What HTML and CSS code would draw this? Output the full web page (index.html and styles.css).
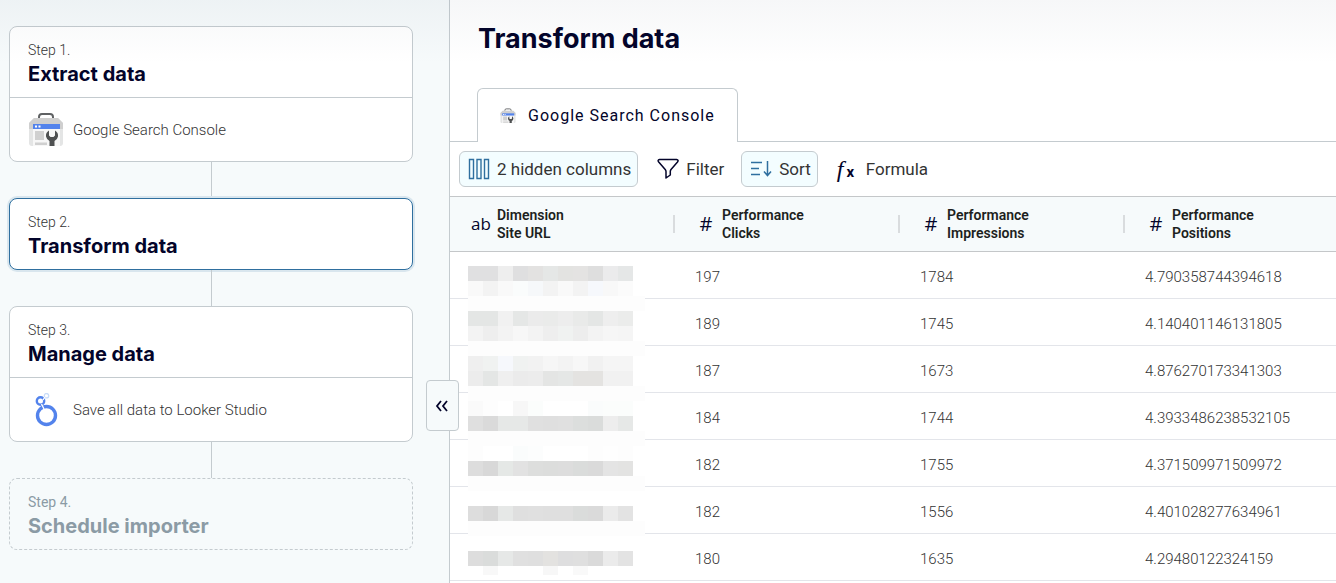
FILE: index.html
```html
<!DOCTYPE html>
<html lang="en">

<head>
    <meta charset="UTF-8">
    <meta name="viewport" content="width=device-width, initial-scale=1.0">
    <title>Transform data</title>
    <link rel="stylesheet" href="styles.css">
</head>

<body>
    <svg class="defs" width="0" height="0" aria-hidden="true">
        <symbol id="search-console" viewBox="0 0 36 34">
            <path d="M11 6V4q0-3 3-3h8q3 0 3 3v2" fill="none" stroke="#5f6163" stroke-width="2" />
            <path d="M6 5h24l5 5v20q0 3-3 3H4q-3 0-3-3V10z" fill="#e4e5e5" />
            <path d="M6 5h24l5 5v6H1v-6z" fill="#cfcfcf" />
            <path d="M5 15h27v18H5z" fill="#f7f7f7" />
            <path d="M5 11h27v5H5z" fill="#5383ec" />
            <path d="M7 12.500h2v2H7zM10.500 12.500h2v2h-2z" fill="#fff" />
            <path d="M7 18h9v9H7zM7 29.500h12V32H7z" fill="#d0d0d0" />
            <path d="M21 17.500q-3.500 2-3 6 .6 3 3.500 4.500V33h5v-5q3-1.500 3.500-4.500.5-4-3-6v5l-1.500 1.500h-3L21 22.500z" fill="#4e5051" />
        </symbol>
    </svg>

    <div class="layout">
        <aside class="sidebar">
            <section class="step">
                <div class="step-head">
                    <div class="step-label">Step 1.</div>
                    <h2 class="step-title">Extract data</h2>
                </div>
                <div class="step-body">
                    <svg class="step-icon"><use href="#search-console" /></svg>
                    Google Search Console
                </div>
            </section>
            <div class="connector"></div>
            <section class="step active">
                <div class="step-head">
                    <div class="step-label">Step 2.</div>
                    <h2 class="step-title">Transform data</h2>
                </div>
            </section>
            <div class="connector"></div>
            <section class="step">
                <div class="step-head">
                    <div class="step-label">Step 3.</div>
                    <h2 class="step-title">Manage data</h2>
                </div>
                <div class="step-body">
                    <svg class="step-icon" viewBox="0 0 36 34" fill="none">
                        <circle cx="18.500" cy="22.500" r="9" stroke="#5383ec" stroke-width="3.400" />
                        <circle cx="12.500" cy="8" r="3.700" stroke="#5383ec" stroke-width="2.400" />
                        <circle cx="18.500" cy="2.700" r="2.200" stroke="#c9dcf8" stroke-width="1.300" />
                        <path d="M13.500 11l2.500 5M15 7l2-3" stroke="#fff" stroke-width="1.300" />
                    </svg>
                    Save all data to Looker Studio
                </div>
            </section>
            <div class="connector"></div>
            <section class="step disabled">
                <div class="step-head">
                    <div class="step-label">Step 4.</div>
                    <h2 class="step-title">Schedule importer</h2>
                </div>
            </section>

            <button class="collapse" type="button" aria-label="Collapse sidebar">
                <svg width="14" height="12" viewBox="0 0 14 12" fill="none" stroke="#03042a" stroke-width="1.800">
                    <path d="M6 1L2 6l4 5M12 1L8 6l4 5" />
                </svg>
            </button>
        </aside>

        <main class="main">
            <h1 class="page-title">Transform data</h1>

            <div class="tabs">
                <button class="tab" type="button">
                    <svg class="tab-icon"><use href="#search-console" /></svg>
                    Google Search Console
                </button>
            </div>

            <div class="toolbar">
                <button class="tool on" type="button">
                    <svg width="22" height="22" viewBox="0 0 22 22" fill="none" stroke="#2f6f9f" stroke-width="1.400">
                        <path d="M1.500 1.500h4v19h-4zM9 1.500h4v19H9zM16.500 1.500h4v19h-4z" />
                    </svg>
                    2 hidden columns
                </button>
                <button class="tool" type="button">
                    <svg width="22" height="22" viewBox="0 0 22 22" fill="none" stroke="#03042a" stroke-width="1.500" stroke-linejoin="round">
                        <path d="M2.500 1.500h17q2.500.5 1 2.500L14 11.500q-.7 1-.7 2v3.500L9 20v-6.500q0-1-.8-2L1.700 4q-1.500-2 .8-2.500z" />
                    </svg>
                    Filter
                </button>
                <button class="tool on" type="button">
                    <svg width="22" height="22" viewBox="0 0 22 22" fill="none" stroke="#2f6f9f" stroke-width="1.500">
                        <path d="M1 4.500h11M1 10.500h8M1 16.500h9M17.500 3v14M14 13.500l3.500 4 3.500-4" />
                    </svg>
                    Sort
                </button>
                <button class="tool" type="button">
                    <span class="fx" aria-hidden="true"><i>f</i><b>x</b></span>
                    Formula
                </button>
            </div>

            <div class="table-wrap">
                <table class="data">
                    <thead>
                        <tr>
                            <th><div class="col"><span class="type">ab</span><span>Dimension<br>Site URL</span></div></th>
                            <th><div class="col"><span class="type num">#</span><span>Performance<br>Clicks</span></div></th>
                            <th><div class="col"><span class="type num">#</span><span>Performance<br>Impressions</span></div></th>
                            <th><div class="col"><span class="type num">#</span><span>Performance<br>Positions</span></div></th>
                        </tr>
                    </thead>
                    <tbody>
                        <tr><td></td><td>197</td><td>1784</td><td>4.790358744394618</td></tr>
                        <tr><td></td><td>189</td><td>1745</td><td>4.140401146131805</td></tr>
                        <tr><td></td><td>187</td><td>1673</td><td>4.876270173341303</td></tr>
                        <tr><td></td><td>184</td><td>1744</td><td>4.3933486238532105</td></tr>
                        <tr><td></td><td>182</td><td>1755</td><td>4.371509971509972</td></tr>
                        <tr><td></td><td>182</td><td>1556</td><td>4.401028277634961</td></tr>
                        <tr><td></td><td>180</td><td>1635</td><td>4.29480122324159</td></tr>
                    </tbody>
                </table>
                <svg class="mosaic" id="mosaic" width="177" height="309" aria-hidden="true"></svg>
            </div>
        </main>
    </div>

    <script src="mosaic.js"></script>
</body>

</html>
```
FILE: styles.css
```css
* {
    box-sizing: border-box;
}

body {
    margin: 0;
    font-family: Roboto, "Liberation Sans", sans-serif;
    color: #333;
    background: #fff;
}

/* soft shade under the top edge of the window */
body::before {
    content: "";
    position: absolute;
    top: 0;
    left: 0;
    right: 0;
    height: 64px;
    background: linear-gradient(rgb(30 50 80 / 0.04), rgb(30 50 80 / 0));
    pointer-events: none;
    z-index: 2;
}

h1,
h2 {
    margin: 0;
    font-family: Inter, sans-serif;
    font-weight: 700;
    color: #03042a;
}

button {
    font: inherit;
    color: inherit;
    cursor: pointer;
}

.defs {
    position: absolute;
}

.layout {
    display: flex;
    height: 100vh;
    overflow: hidden;
}

/* sidebar */
.sidebar {
    position: relative;
    flex: 0 0 450px;
    padding: 26px 36px 0 9px;
    background: #f6fafb;
    border-right: 1px solid #c4cbcf;
}

.step {
    background: #fff;
    border: 1px solid #c4cbcf;
    border-radius: 8px;
}

.step.active {
    border-color: #2f6f9f;
    box-shadow: 0 0 0 2px #d9e6ee;
}

.step.disabled {
    background: none;
    border-style: dashed;
}

.step-head {
    padding: 12px 18px 10px;
}

.step-label {
    font-size: 14px;
    font-weight: 300;
    line-height: 22px;
}

.step-title {
    font-size: 20px;
    line-height: 26px;
}

.disabled .step-label,
.disabled .step-title {
    color: #8b9ba5;
}

.disabled .step-label {
    font-weight: 400;
}

.step-body {
    display: flex;
    align-items: center;
    gap: 9px;
    height: 64px;
    padding: 0 18px;
    border-top: 1px solid #c4cbcf;
    font-size: 15px;
    font-weight: 300;
}

.step-icon {
    width: 36px;
    height: 34px;
}

.connector {
    width: 1px;
    height: 36px;
    margin: 0 auto;
    background: #c4cbcf;
}

.collapse {
    position: absolute;
    top: 380px;
    right: -10px;
    width: 33px;
    height: 51px;
    padding: 0;
    background: #f6fafb;
    border: 1px solid #c4cbcf;
    border-radius: 4px;
    z-index: 1;
}

.collapse svg {
    display: block;
    margin: 0 8px;
}

/* main */
.main {
    flex: 1;
    min-width: 0;
}

.page-title {
    padding: 21px 28px 31px;
    font-size: 27px;
    line-height: 36px;
}

.tabs {
    display: flex;
    padding-left: 27px;
    border-bottom: 1px solid #c4cbcf;
}

.tab {
    display: flex;
    align-items: center;
    gap: 12px;
    height: 54px;
    margin-bottom: -1px;
    padding: 0 22px;
    background: #fff;
    border: 1px solid #c4cbcf;
    border-bottom: 0;
    border-radius: 6px 6px 0 0;
    font-size: 16px;
    letter-spacing: 1px;
    color: #03042a;
}

.tab-icon {
    width: 16px;
    height: 16px;
}

.toolbar {
    display: flex;
    gap: 10px;
    padding: 9px;
}

.tool {
    display: flex;
    align-items: center;
    gap: 7px;
    height: 36px;
    padding: 0 6px 0 8px;
    background: none;
    border: 1px solid transparent;
    border-radius: 6px;
    font-size: 17px;
}

.tool.on {
    background: #f3fdff;
    border-color: #c4cbcf;
}

.fx {
    display: flex;
    align-items: baseline;
    gap: 3px;
    width: 22px;
    color: #03042a;
}

.fx i {
    font-family: "Liberation Serif", serif;
    font-size: 24px;
    line-height: 26px;
}

.fx b {
    font-size: 15px;
}

.table-wrap {
    position: relative;
}

.data {
    width: 100%;
    table-layout: fixed;
    border-collapse: separate;
    border-spacing: 0;
}

.data th {
    width: 225px;
    height: 56px;
    padding: 0;
    background: #f6fafb;
    border-top: 1px solid #c4c7c9;
    border-bottom: 1px solid #c4c7c9;
    text-align: left;
    font-size: 14px;
    font-weight: 600;
    line-height: 18px;
    color: #1d1f21;
}

.data th:last-child {
    width: auto;
}

.col {
    display: flex;
    align-items: center;
    gap: 6px;
    padding-left: 21px;
}

th:not(:last-child) .col {
    background: linear-gradient(#d9dcde, #d9dcde) right center / 2px 18px no-repeat;
}

.type {
    width: 20px;
    text-align: center;
    font-family: "Open Sans", sans-serif;
    font-size: 17px;
    font-weight: 400;
    color: #03042a;
}

.type.num {
    font-size: 20px;
}

.data td {
    height: 47px;
    padding: 3px 20px 0;
    border-bottom: 1px solid #e3e5ea;
    font-size: 15px;
    font-weight: 300;
}

/* pixelated cover over the site URLs */
.mosaic {
    position: absolute;
    top: 70px;
    left: 18px;
}
```
FILE: mosaic.js
```js
// 15px blocks, one row of shades per line; "-" leaves the row blank white
const rows = [
    'e0e0e1 e0e0e1 eeeeee dfdfe0 e3e2e1 e5e7e6 e3e3e1 e4e3e2 dedede ebebec e5e7e7',
    'f9f9f9 f3f3f3 f9f9f9 fafcfc f6f8fa f3f3f3 f9f9f9 f3f3f3 f6f8fc f8f8f8 fbfbfb',
    'band',
    'e4e6e5 e4e6e5 f1f1f1 e5e7e6 ebebeb eaebea ededed e9eae9 e4e6e5 eeeeee ebeceb',
    'f3f3f3 eeeeee f3f3f3 f7f7f7 f3f3f3 eeeeee f0f2f1 ededed f3f3f3 f6f6f6 f5f5f5',
    'band',
    'efefef f0f2f1 f6f8fc f0f2f1 f2f2f2 f6f6f6 f3f3f3 f7f7f7 f1f1f1 f5f5f5 f5f5f5',
    'ececec e4e6e5 efefef ebebeb ececec e4e5e4 e5e7e6 e4e3e1 e4e3e1 f1f1f1 f1f1f1',
    'band',
    'fafafa fdfdfd ffffff f7f7f7 fbfdfc ffffff ffffff ffffff fafcfc fbfdfc fbfdfc',
    'dfdfdf dadada e6e8e7 e6e8e7 e0e0e0 dfdfdf e0e0e0 dcdedd dadcdb ededed e6e8e7',
    'band',
    'fdfdfd ffffff ffffff fafcfc fcfdfd ffffff ffffff ffffff fdfdfd fefefe fdfdfd',
    'dddddd d8d8d8 e5e8e6 e2e2e2 dddedd dcdddc dddddd dadcdb dadada e4e4e4 e3e3e2',
    'band',
    '-',
    'dddddd d8d8d8 e6e8e7 dfdfdf e0e0e0 dfdfdf dfdfdf dadcdb dadada ebebeb e3e3e3',
    'band',
    '-',
    'dddddd dadcdb e6e8e7 e0e0e0 dfdfdf e3e2e0 dededf dfdfdf dadada ebebeb e3e3e3',
    'ffffff f8f8f8 ffffff ffffff ffffff f7f7f7 ffffff f9f9f9 ffffff ffffff ffffff'
];

const svg = document.getElementById('mosaic');

function block(x, y, width, fill) {
    const rect = document.createElementNS('http://www.w3.org/2000/svg', 'rect');
    rect.setAttribute('x', x);
    rect.setAttribute('y', y);
    rect.setAttribute('width', width);
    rect.setAttribute('height', 15);
    rect.setAttribute('fill', fill);
    svg.appendChild(rect);
}

rows.forEach((row, r) => {
    if (row === 'band') {
        block(0, r * 15, 177, '#fdfdfd');
    } else if (row !== '-') {
        row.split(' ').forEach((shade, c) => block(c * 15, r * 15, 15, '#' + shade));
    }
});
```
